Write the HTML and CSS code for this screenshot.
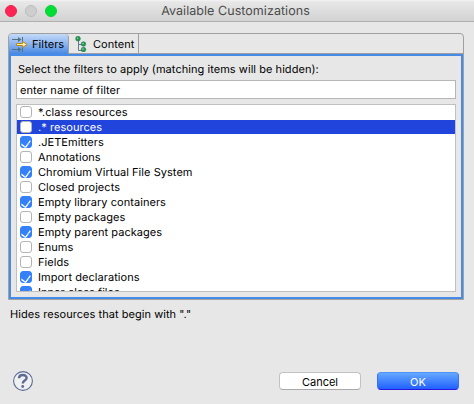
FILE: index.html
```html
<!DOCTYPE html>
<html lang="en">
<head>
<meta charset="utf-8">
<title>Available Customizations</title>
<link rel="stylesheet" href="styles.css">
</head>
<body>
<div class="window">
  <header class="titlebar">
    <div class="lights"><i class="light close"></i><i class="light minimize"></i><i class="light zoom"></i></div>
    <h1 class="title">Available Customizations</h1>
  </header>
  <section class="folder">
    <nav class="tabs">
      <div class="tab active">
        <svg class="tab-icon" width="16" height="16" viewBox="0 0 16 16" fill="none">
          <path d="M0 3.5h7M0 13.5h7M10.5 1v5M10.5 11v5" stroke="#53717f"/>
          <path d="M6 1l3.5 2.5L6 6zM6 11l3.5 2.5L6 16z" fill="#53717f"/>
          <path d="M4.5 7.5h6v-2l4.7 3-4.7 3v-2h-6z" fill="#fff2b0" stroke="#b98516"/>
        </svg>
        <span>Filters</span>
      </div>
      <div class="tab content-tab">
        <svg class="tab-icon" width="12" height="16" viewBox="0 0 12 16">
          <path d="M3.5 4v10.5H7M3.5 8.5H7" fill="none" stroke="#66788f"/>
          <g fill="#259653" stroke="#167342" stroke-width=".5"><circle cx="3" cy="2.7" r="2.4"/><circle cx="8.5" cy="8" r="2.3"/><circle cx="8.5" cy="13.6" r="2.3"/></g>
          <g fill="#91d3a7"><circle cx="2.5" cy="2.2" r=".8"/><circle cx="8" cy="7.5" r=".8"/><circle cx="8" cy="13.1" r=".8"/></g>
        </svg>
        <span>Content</span>
      </div>
    </nav>
    <div class="panel">
      <p class="prompt">Select the filters to apply (matching items will be hidden):</p>
      <div class="field"><span>enter name of filter</span></div>
      <ul class="list">
        <li><i class="box"></i><span>*.class resources</span></li>
        <li class="selected"><i class="box"></i><span>.* resources</span></li>
        <li><i class="box checked"></i><span>.JETEmitters</span></li>
        <li><i class="box"></i><span>Annotations</span></li>
        <li><i class="box checked"></i><span>Chromium Virtual File System</span></li>
        <li><i class="box"></i><span>Closed projects</span></li>
        <li><i class="box checked"></i><span>Empty library containers</span></li>
        <li><i class="box"></i><span>Empty packages</span></li>
        <li><i class="box checked"></i><span>Empty parent packages</span></li>
        <li><i class="box"></i><span>Enums</span></li>
        <li><i class="box"></i><span>Fields</span></li>
        <li><i class="box checked"></i><span>Import declarations</span></li>
        <li><i class="box checked"></i><span>Inner class files</span></li>
      </ul>
    </div>
  </section>
  <p class="description">Hides resources that begin with "."</p>
  <footer class="actions">
    <svg class="help" width="20" height="20" viewBox="0 0 20 20" fill="none">
      <circle cx="10" cy="10" r="9.4" fill="#f0f0f2" stroke="#5b6b94" stroke-width="1.1"/>
      <path d="M6 7.2C6.1 3 13.7 3.1 13.6 7c0 2.6-3.8 2.6-3.8 5.4" stroke="#5b6b94" stroke-width="2.4"/>
      <circle cx="9.7" cy="15.5" r="1.4" fill="#5b6b94"/>
    </svg>
    <button class="button cancel">Cancel</button>
    <button class="button ok">OK</button>
  </footer>
</div>
</body>
</html>
```
FILE: styles.css
```css
* { box-sizing: border-box; }
body {
  margin: 0;
  background: #e7e7e7;
  color: #000;
  font: 11px/14px Inter, "Liberation Sans", sans-serif;
  letter-spacing: .05px;
  text-rendering: geometricPrecision;
}
h1, p, ul { margin: 0; padding: 0; font-weight: 400; }
span, p, h1 { white-space: nowrap; }
.window { width: 474px; height: 404px; overflow: hidden; }
.titlebar {
  display: grid;
  grid-template-columns: 62px 1fr 65px;
  align-items: center;
  height: 22px;
  background: linear-gradient(#f3f3f3 0, #e7e7e7 2px, #d2d2d2);
  border-bottom: 1px solid #b0b0b0;
}
.lights { display: flex; gap: 8px; padding-left: 5px; }
.light { width: 12px; height: 12px; border-radius: 50%; border: 1px solid; }
.close { background: #ff2453; border-color: #e92450; }
.minimize { background: #cecece; border-color: #bcbcbc; }
.zoom { background: #00df35; border-color: #18c83b; }
.title { font-size: 12.5px; line-height: 18px; color: #4b4b4b; text-align: center; padding-top: 3px; }
.folder {
  width: 456px;
  height: 267px;
  margin: 11px 0 0 8px;
  border: 1px solid #a0a0a0;
  border-radius: 4px 4px 0 0;
  overflow: hidden;
}
.tabs { display: flex; height: 20px; border-bottom: 1px solid #a0a0a0; }
.tab { display: flex; align-items: center; height: 19px; border-right: 1px solid #a0a0a0; }
.tab.active {
  width: 60px;
  height: 20px;
  padding-left: 3px;
  gap: 4px;
  background: linear-gradient(#c3d9f8, #8bb4ef 50%, #4688e3);
  border-top-right-radius: 4px;
}
.content-tab { width: 70px; padding-left: 6px; gap: 6px; }
.tab-icon { flex: none; }
.panel { height: 245px; border: 2px solid #478be8; padding: 6px 5px 5px; }
.prompt { padding-left: 2px; height: 18px; }
.field { height: 19px; background: #fff; border: 1px solid #b6b6b6; padding: 2px 3px; }
.list {
  height: 188px;
  margin-top: 5px;
  background: #fff;
  border: 1px solid #c0c0c0;
  list-style: none;
  overflow: hidden;
}
.list li { display: flex; align-items: center; gap: 6px; height: 14px; margin-bottom: 1px; padding-left: 3px; }
.list .selected { background: #2145dc; color: #fff; }
.box { flex: none; width: 12px; height: 12px; border: 1px solid #b4b4b4; border-radius: 3px; background: #fff; }
.box.checked { display: flex; justify-content: center; background: #3380f8; border-color: #3380f8; }
.box.checked::after {
  content: "";
  width: 4.5px;
  height: 7.5px;
  margin-top: .5px;
  border: solid #fff;
  border-width: 0 1.6px 1.6px 0;
  border-width: 0 1.6px 1.6px 0;
  transform: rotate(36deg) scale(.95);
  box-shadow: .4px .4px 0 #fff;
}
.description { margin: 7px 0 0 10px; }
.actions { display: flex; align-items: center; height: 20px; margin: 50px 15px 0 13px; }
.button {
  width: 82px;
  height: 18px;
  padding: 2px 0 0;
  border: 1px solid #c2c2c2;
  border-bottom-color: #a9a9a9;
  border-radius: 4px;
  background: #fff;
  color: #000;
  font: inherit;
  line-height: 14px;
}
.cancel { margin-left: auto; }
.ok { margin-left: 16px; color: #fff; background: linear-gradient(#65a8ff, #2160ff); border-color: #4f95f8 #3974ef #2b16e4; }
```
